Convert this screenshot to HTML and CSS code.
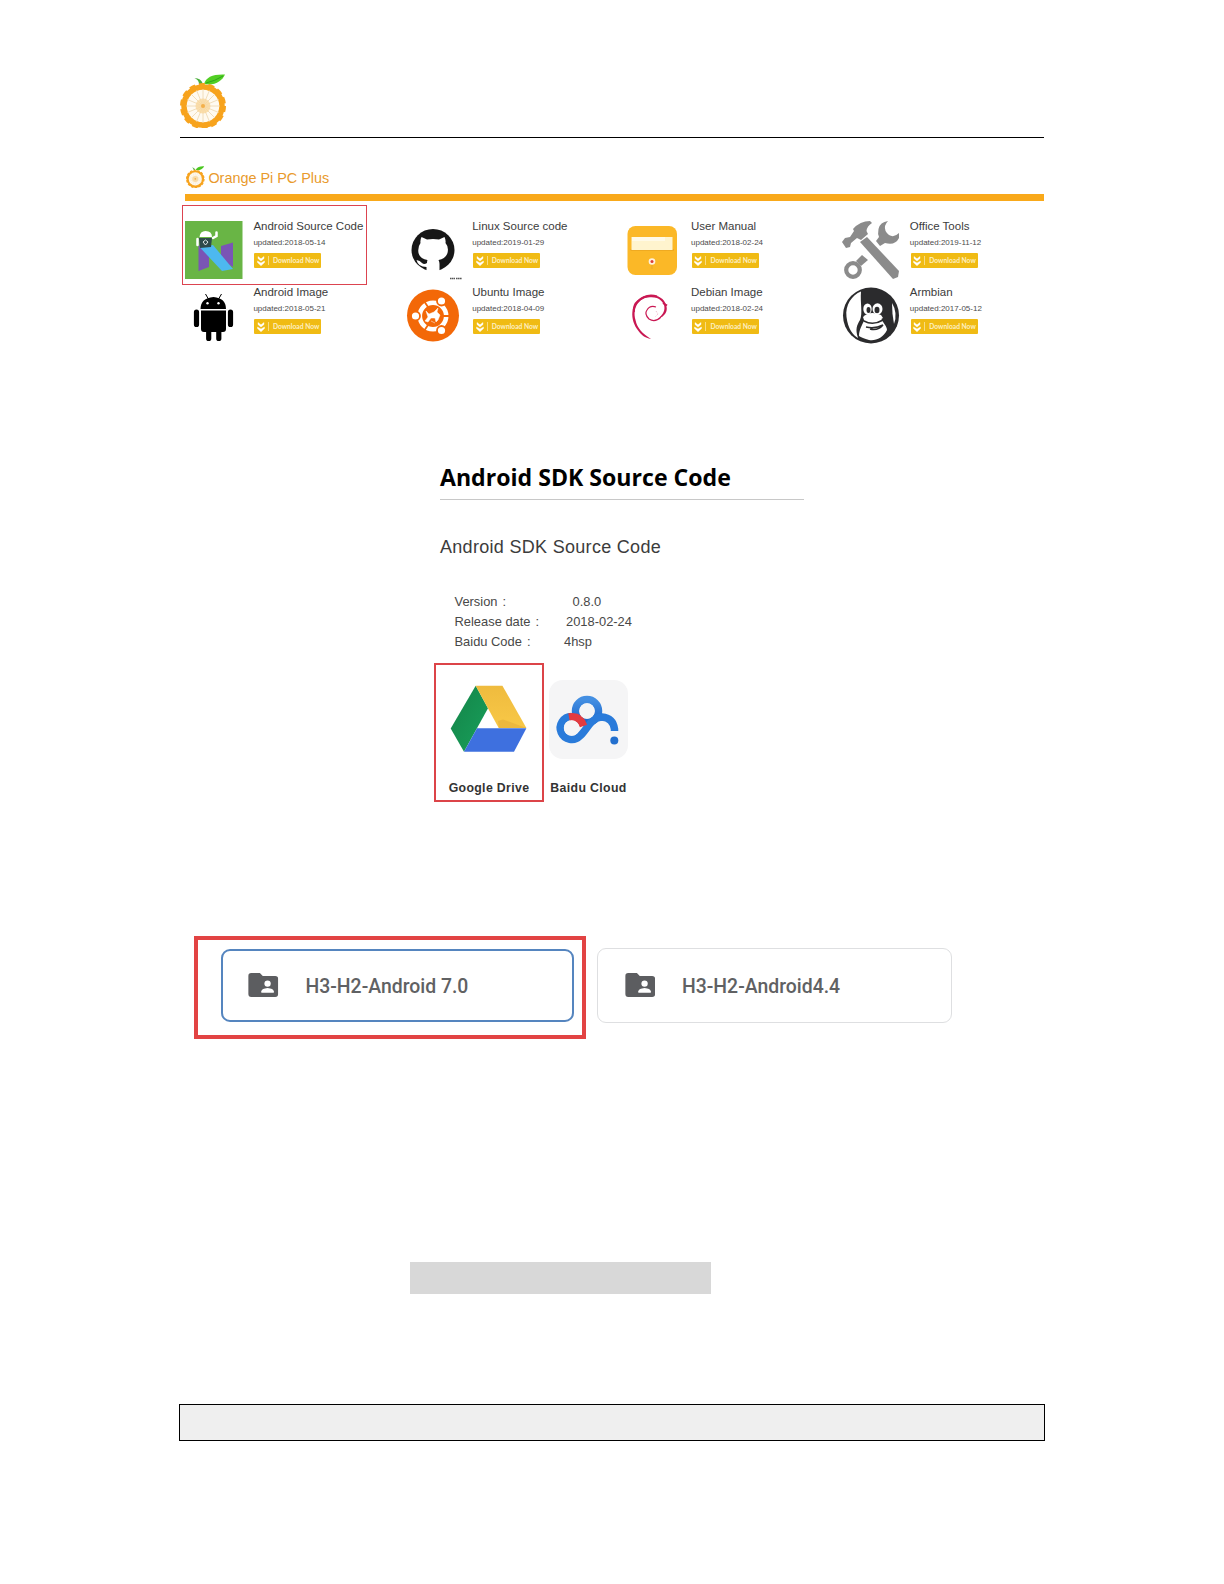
FILE: index.html
```html
<!DOCTYPE html>
<html lang="en">
<head>
<meta charset="utf-8">
<title>Orange Pi PC Plus downloads</title>
<link rel="stylesheet" href="styles.css">
</head>
<body>
<svg class="defs" aria-hidden="true">
  <symbol id="orange" viewBox="0 0 47 56">
    <path d="M19 12Q19 8 14.500 6Q21 6 23 12Z" fill="#4caf3c"/>
    <path d="M24 12C26 5 33 2 45 2.500C42 9 35 14 24 12Z" fill="#52cf24"/>
    <path d="M26 11Q35 9 43 4" stroke="#2fa51d" fill="none"/>
    <circle cx="23" cy="34" r="19" fill="#fffaf0" stroke="#f7a31d" stroke-width="5.500"/>
    <circle cx="23" cy="34" r="21.500" fill="none" stroke="#f7a31d" stroke-width="3" stroke-dasharray="6 3.650"/>
    <path d="M23 17V51M6 34H40M11 22L35 46M11 46L35 22M16.500 18.300L29.500 49.700M7.300 27.500L38.700 40.500M7.300 40.500L38.700 27.500M16.500 49.700L29.500 18.300" stroke="#ecd5ad" stroke-width=".8"/>
    <circle cx="23" cy="34" r="7.500" fill="#f9d79c" opacity=".8"/>
    <circle cx="23" cy="34" r="2" fill="#f4b04a"/>
  </symbol>
  <symbol id="chevrons" viewBox="0 0 8 10">
    <path d="M1 .5l3 2.300L7 .5v2L4 5 1 2.500zM.5 5L4 7 7.500 5v1.500L4 9.800.5 6.500z" fill="#fff" stroke="#fff" stroke-width=".4"/>
  </symbol>
  <symbol id="shared-folder" viewBox="0 0 31 25">
    <path d="M3 0H12L15 3H28Q31 3 31 6V22Q31 25 28 25H3Q0 25 0 22V3Q0 0 3 0Z" fill="#5c5d60"/>
    <circle cx="20" cy="11" r="3.300" fill="#fff"/>
    <path d="M13.500 20.500V19Q14 16 20 15.500Q26 16 26.500 19V20.500Z" fill="#fff"/>
  </symbol>
</svg>

<main class="page">
  <header class="page-header"><svg class="logo"><use href="#orange"/></svg></header>

  <section class="downloads">
    <h1 class="product"><svg class="product-icon"><use href="#orange"/></svg>Orange Pi PC Plus</h1>
    <div class="grid">
      <article class="card marked">
        <svg class="pic" viewBox="0 0 68 66">
          <rect y="4" width="57.500" height="58" fill="#69b545"/>
          <path d="M13.500 28L24 34V50L13.500 54Z" fill="#7a55b5"/><path d="M36 29L48 25.500V50L36 43Z" fill="#7a55b5"/>
          <path d="M14.500 30L28 28L48 52L37 54Z" fill="#4db8f0"/>
          <path d="M14 21H27L26 30L15 31Z" fill="#2e4a4b"/>
          <path d="M14.500 20Q15 14 20.500 14Q27 14 27 20Z" fill="#fff"/>
          <path d="M12.500 22V28M28 21L31.500 19V15.500" stroke="#fff" stroke-width="2.500" stroke-linecap="round" fill="none"/>
          <path d="M18 25L20.500 23L23 25L20.500 28Z" fill="none" stroke="#dce8e8"/>
        </svg>
        <div class="info"><h2 class="name">Android Source Code</h2><p class="date">updated:2018-05-14</p><span class="button"><svg class="chev"><use href="#chevrons"/></svg><span class="label">Download Now</span></span></div>
      </article>
      <article class="card">
        <svg class="pic" viewBox="0 0 68 66">
          <ellipse cx="29" cy="33" rx="21.500" ry="21" fill="#171717"/>
          <path d="M17.500 20L23 22.500Q29 21.500 35 22.500L40.500 20Q42 23 41.500 26Q45 30 43.500 36Q41.500 42 34.500 43Q35.500 45 35.500 47V55H22.500V50Q14 50 12.500 43Q16 43.500 18 46Q20 48 23 46Q23 44 23.500 43Q16 42 14.500 36Q13.500 30 16.500 26Q16 23 17.500 20Z" fill="#fff"/>
          <path d="M46 61.500H51M52 61.500H58" stroke="#555" stroke-width="1.300" stroke-dasharray="1.500 .4"/>
        </svg>
        <div class="info"><h2 class="name">Linux Source code</h2><p class="date">updated:2019-01-29</p><span class="button"><svg class="chev"><use href="#chevrons"/></svg><span class="label">Download Now</span></span></div>
      </article>
      <article class="card">
        <svg class="pic" viewBox="0 0 68 66">
          <rect x="4.500" y="9" width="49.500" height="49" rx="8" fill="#fbb827"/>
          <path d="M7.500 33H51" stroke="#e49b1d"/><rect x="8.500" y="20" width="41" height="13" fill="#fff4ce"/>
          <rect x="9" y="20" width="33" height="4" fill="#fffae7"/>
          <circle cx="29" cy="44.500" r="3.300" fill="#fff0dc"/><circle cx="29" cy="44.500" r="1.500" fill="#dc3d38"/>
          <path d="M29 48V52" stroke="#e5a82b"/>
        </svg>
        <div class="info"><h2 class="name">User Manual</h2><p class="date">updated:2018-02-24</p><span class="button"><svg class="chev"><use href="#chevrons"/></svg><span class="label">Download Now</span></span></div>
      </article>
      <article class="card">
        <svg class="pic" viewBox="0 0 68 66">
          <g fill="#8b8b8b">
            <path d="M18 25L25 20L57 54L56 60L51 62Z"/>
            <path d="M0 25L3 21L8 20L12 14L11 12Q18 4 28 4L30 6Q25 9 24.500 14L26 17L19 23L15 21L9 26L8 30L4 31Z"/>
            <path d="M46 4Q38 5 36.500 12Q35.500 17 37 20L34 24L38 29L43 26Q53 29 57 21V16Q52 21 47 18Q42 14 43 9Q44 6 46 4Z"/>
            <path d="M20 38L26 43L19 49L14 44Z"/>
          </g>
          <circle cx="11" cy="53" r="6.800" fill="none" stroke="#8b8b8b" stroke-width="4.200"/>
        </svg>
        <div class="info"><h2 class="name">Office Tools</h2><p class="date">updated:2019-11-12</p><span class="button"><svg class="chev"><use href="#chevrons"/></svg><span class="label">Download Now</span></span></div>
      </article>
      <article class="card">
        <svg class="pic" viewBox="0 0 68 66">
          <path d="M15.500 26Q15.500 15 28.500 14Q41 15 41 26ZM16 27.500H41V46Q41 49 38 49H19Q16 49 16 46Z"/>
          <path d="M11.500 29V41.500M45.500 29V41.500M23.700 47V55.500M33.800 47V55.500" stroke="#000" stroke-width="5.200" stroke-linecap="round"/>
          <path d="M20.500 11L24 17M36.500 11L33 17" stroke="#000"/>
          <circle cx="22.500" cy="20.300" r="1.200" fill="#fff"/><circle cx="33.500" cy="20.300" r="1.200" fill="#fff"/>
        </svg>
        <div class="info"><h2 class="name">Android Image</h2><p class="date">updated:2018-05-21</p><span class="button"><svg class="chev"><use href="#chevrons"/></svg><span class="label">Download Now</span></span></div>
      </article>
      <article class="card">
        <svg class="pic" viewBox="0 0 68 66">
          <circle cx="29" cy="32.500" r="26" fill="#f36808"/>
          <circle cx="29" cy="33" r="13.200" fill="none" stroke="#fff" stroke-width="4.600"/>
          <path d="M46 33H39M20 18L24 24M20 48L24 42" stroke="#f36808" stroke-width="1.800"/>
          <g fill="#fff" stroke="#f36808" stroke-width="1.800"><circle cx="11.500" cy="33" r="4.500"/><circle cx="37.500" cy="18" r="4.500"/><circle cx="37.500" cy="47.500" r="4.500"/></g>
          <path d="M22 28L25 31L30 29L34 25L33 29L36 32L34 37L32 39L31 35L27 35L24 39L21 38L24 34ZM27 38L31 40" fill="#fff" stroke="#fff" stroke-width=".5"/>
        </svg>
        <div class="info"><h2 class="name">Ubuntu Image</h2><p class="date">updated:2018-04-09</p><span class="button"><svg class="chev"><use href="#chevrons"/></svg><span class="label">Download Now</span></span></div>
      </article>
      <article class="card">
        <svg class="pic" viewBox="0 0 68 66">
          <path d="M43 22C41 14 31 10 22 13C8 18 6 34 14 46C18 52 22 55 28 56C20 51 14 45 12.500 37C9 24 17 15 25 14.500C34 13 39 17 41 22C42.500 27 40 31 37 34L39 34C43 31 45 27 43 22Z" fill="#c91853"/>
          <path d="M14 19Q23 10 34 13.500M11 29Q10 22 15 18M40 20L44 22.500" stroke="#c91853" stroke-width="2" fill="none"/>
          <path d="M38 34Q32 40 26 36Q21 31 24 27Q27 22 33 24" stroke="#c91853" stroke-width="1.200" fill="none"/>
          <path d="M33 28L35 31L32 34" stroke="#e9a5bc" stroke-width=".8" stroke-dasharray="1 1" fill="none"/>
        </svg>
        <div class="info"><h2 class="name">Debian Image</h2><p class="date">updated:2018-02-24</p><span class="button"><svg class="chev"><use href="#chevrons"/></svg><span class="label">Download Now</span></span></div>
      </article>
      <article class="card">
        <svg class="pic" viewBox="0 0 68 66">
          <circle cx="29" cy="32.500" r="28" fill="#2b2b2d"/>
          <path d="M19 8.500C10 12 3 22 4.500 34C6 46 11 52 16 55C13 46 15 42 18 37C21 30 18 20 19 8.500Z" fill="#fff"/>
          <path d="M50 20Q56 30 52 41Q50 31 50 20Z" fill="#fff"/>
          <path d="M23 36L39 35C41 40 45 43 45 47C41 55 34 58 27 57Q20 55 17 53C17 47 20 42 23 36Z" fill="#fff"/>
          <ellipse cx="25.500" cy="26" rx="4.200" ry="5.500" fill="#fff"/><ellipse cx="35.500" cy="26" rx="5" ry="5.800" fill="#fff"/>
          <ellipse cx="26.500" cy="27" rx="2" ry="3" fill="#2b2b2d"/><ellipse cx="35" cy="27" rx="2.500" ry="3.200" fill="#2b2b2d"/>
          <path d="M21 34Q28 27 39 32L41 35Q32 41 22 37Z" fill="#fff"/>
          <path d="M22 38Q31 43 41 37M24 44Q33 46 41 42Q36 48 28 46" stroke="#2b2b2d" stroke-width="1.500" fill="none"/>
        </svg>
        <div class="info"><h2 class="name">Armbian</h2><p class="date">updated:2017-05-12</p><span class="button"><svg class="chev"><use href="#chevrons"/></svg><span class="label">Download Now</span></span></div>
      </article>
    </div>
  </section>

  <section class="sdk">
    <h2 class="sdk-title">Android SDK Source Code</h2>
    <h3 class="sdk-subtitle">Android SDK Source Code</h3>
    <dl class="facts">
      <div class="fact version"><dt>Version<span class="colon">:</span></dt><dd>0.8.0</dd></div>
      <div class="fact release"><dt>Release date<span class="colon">:</span></dt><dd>2018-02-24</dd></div>
      <div class="fact code"><dt>Baidu Code<span class="colon">:</span></dt><dd>4hsp</dd></div>
    </dl>
    <div class="mirrors">
      <div class="mirror selected">
        <svg class="mirror-icon" viewBox="0 0 79 79">
          <defs>
            <linearGradient id="dg" x2="1" y2="1"><stop stop-color="#148348"/><stop offset="1" stop-color="#18a05b"/></linearGradient>
            <linearGradient id="dy" x2="0" y2="1"><stop stop-color="#efbb3e"/><stop offset="1" stop-color="#f8c847"/></linearGradient>
          </defs>
          <path d="M.7 48.500L25.700 5.700L38 28.300L14 71.700Z" fill="url(#dg)"/>
          <path d="M25.700 5.700H52.400L76.400 48H48.700Z" fill="url(#dy)"/>
          <path d="M48 41L53 39.500L76.400 48H49Z" fill="#e7b23c" opacity=".7"/>
          <path d="M27 48.300H76.400L64 71.700H14Z" fill="#3e70df"/>
        </svg>
        <span class="mirror-name">Google Drive</span>
      </div>
      <div class="mirror">
        <svg class="mirror-icon" viewBox="0 0 79 79">
          <defs><linearGradient id="bd" x2="0" y2="1"><stop stop-color="#448fe2"/><stop offset="1" stop-color="#1b66cb"/></linearGradient></defs>
          <rect width="79" height="79" rx="14" fill="#f5f5f6"/>
          <g fill="none" stroke-width="7.500">
            <circle cx="38" cy="31" r="11.500" stroke="url(#bd)"/>
            <path d="M22.500 36.500A11.500 11.500 0 1 0 31 56C38 50 42 37 53 37Q64 38 65.500 49V51" stroke="#2a7bda"/>
            <path d="M20 37Q31 35 34.500 46" stroke="#e43b40"/>
          </g>
          <circle cx="22.500" cy="48" r="7.700" fill="#f5f5f6"/><circle cx="38" cy="31" r="7.700" fill="#f5f5f6"/>
          <circle cx="65.300" cy="60.500" r="4" fill="#226fce"/>
        </svg>
        <span class="mirror-name">Baidu Cloud</span>
      </div>
    </div>
  </section>

  <section class="folders">
    <div class="folder-mark"><div class="folder active"><svg class="folder-icon"><use href="#shared-folder"/></svg><span class="folder-name">H3-H2-Android 7.0</span></div></div>
    <div class="folder plain"><svg class="folder-icon"><use href="#shared-folder"/></svg><span class="folder-name">H3-H2-Android4.4</span></div>
  </section>

  <div class="highlight"></div>
  <footer class="page-footer"></footer>
</main>
</body>
</html>
```
FILE: styles.css
```css
* { box-sizing: border-box; }
body { margin: 0; background: #fff; font-family: "Liberation Sans", Arial, sans-serif; color: #3c3c3c; }
h1, h2, h3, p, dl, dd { margin: 0; font-weight: 400; }
svg { display: block; flex: none; }
.defs { position: absolute; width: 0; height: 0; }
.page { display: flex; flex-direction: column; width: 1224px; height: 1584px; padding: 72px 180px 0 180px; }

.page-header { height: 66px; border-bottom: 1px solid #000; }
.logo { width: 47px; height: 56px; }

.downloads { margin: 27px 0 0 5.400px; }
.product { display: flex; gap: 3.500px; height: 36px; padding-left: .500px; border-bottom: 7px solid #f9a91a; font-size: 14.400px; line-height: 26px; color: #e99a2c; }
.product-icon { width: 19px; height: 23px; }
.grid { display: grid; grid-template-columns: repeat(4, 218.800px); grid-auto-rows: 66px; width: 858px; margin-top: 16px; }
.card { position: relative; display: flex; }
.marked::after { content: ""; position: absolute; left: -3.400px; top: -12px; width: 183px; height: 78px; border: 1px solid #dc4450; }
.pic { width: 68px; height: 66px; }
.info { display: flex; flex-direction: column; padding-top: 1px; white-space: nowrap; }
.name { font-size: 11.500px; line-height: 16px; }
.date { margin-top: 3px; font-size: 8px; line-height: 12px; color: #4c4c4c; }
.button { display: flex; align-items: center; width: 67px; height: 15px; margin: 4px 0 0 1px; border-radius: 1px; background: #f0bb14; }
.chev { width: 8px; height: 10px; margin-left: 2.500px; }
.label { margin-left: 3px; padding-left: 4px; border-left: 1px solid #f8dc83; font: 700 6.700px/9px Lato, sans-serif; color: #fdf0c4; }

.sdk { width: 370px; margin: 113px 0 0 254px; }
.sdk-title { width: 364px; height: 38px; margin-left: 6px; border-bottom: 1px solid #c8c8c8; font: 700 23.100px/30px "Open Sans", sans-serif; color: #000; white-space: nowrap; }
.sdk-subtitle { margin: 35px 0 0 6px; font-size: 18px; line-height: 24px; letter-spacing: .3px; white-space: nowrap; }
.facts { margin: 33px 0 0 20.500px; font-size: 12.900px; line-height: 20.200px; color: #484848; }
.fact { display: flex; }
.colon { margin-left: 5px; }
.version dt { width: 118px; }
.release dt { width: 111.500px; }
.code dt { width: 109.500px; }
.mirrors { display: flex; margin-top: 10px; gap: 2px; }
.mirror { display: flex; flex-direction: column; align-items: center; width: 85px; height: 139px; padding-top: 17px; }
.selected { width: 110px; padding-top: 15px; border: 2px solid #dc4448; }
.mirror-icon { width: 79px; height: 79px; }
.mirror-name { margin-top: 21px; font-size: 12.300px; font-weight: 700; line-height: 16px; letter-spacing: .35px; color: #333; white-space: nowrap; }

.folders { display: flex; align-items: center; gap: 11px; margin: 134px 0 0 14px; }
.folder-mark { width: 392px; height: 103px; padding: 9px 0 0 23px; border: 4px solid #e24343; }
.folder { display: flex; align-items: center; gap: 27px; border-radius: 9px; }
.plain { width: 355px; height: 75px; margin-bottom: 4px; padding-left: 26.500px; border: 1.500px solid #dedfe1; }
.active { width: 353px; height: 73px; padding-left: 25px; border: 2px solid #5585bf; }
.folder-icon { width: 30.500px; height: 24px; }
.folder-name { padding-top: 4px; font: 500 19.400px/28px Roboto, sans-serif; color: #606163; white-space: nowrap; }

.highlight { width: 301px; height: 32px; margin: 223px 0 0 230px; background: #d8d8d8; }
.page-footer { width: 866px; height: 37px; margin: 110px 0 0 -1px; border: 1px solid #000; background: #efefef; }
```
